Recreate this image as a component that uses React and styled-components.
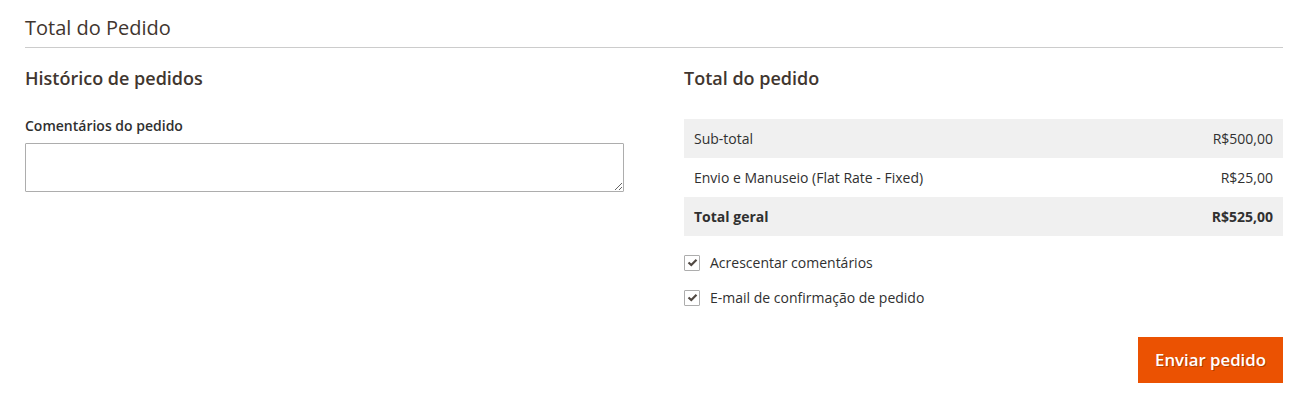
import React from "react";
import styled, { createGlobalStyle } from "styled-components";

const Global = createGlobalStyle`
  html, body { margin: 0; padding: 0; background: #fff; }
  body { font-family: "Open Sans", "Noto Sans", sans-serif; color: #303030; }
  * { box-sizing: border-box; }
`;

const Page = styled.div`
  padding: 16px 24px 0 25px;
`;

const SectionTitle = styled.h2`
  margin: 0;
  font-size: 20px;
  font-weight: 400;
  line-height: 24px;
  color: #41362f;
  padding-bottom: 7px;
  border-bottom: 1px solid #cccccc;
`;

const Columns = styled.div`
  display: grid;
  grid-template-columns: 1fr 1fr;
  column-gap: 60px;
  padding-top: 20px;
`;

const Column = styled.div`
  display: flex;
  flex-direction: column;
`;

const ItemTitle = styled.h3`
  margin: 0;
  font-size: 18px;
  font-weight: 600;
  line-height: 20px;
  color: #41362f;
`;

const FieldLabel = styled.label`
  margin-top: 28px;
  font-size: 14px;
  font-weight: 600;
  line-height: 19px;
  color: #303030;
`;

const TextArea = styled.textarea`
  margin-top: 8px;
  width: 100%;
  height: 49px;
  border: 1px solid #adadad;
  border-radius: 1px;
  font-family: inherit;
  font-size: 14px;
  padding: 6px 10px;
  outline: none;
`;

const Totals = styled.div`
  margin-top: 31px;
  display: flex;
  flex-direction: column;
`;

const Row = styled.div`
  display: flex;
  justify-content: space-between;
  padding: 10px 10px;
  font-size: 14px;
  line-height: 19px;
  background: ${(p) => (p.$shaded ? "#f0f0f0" : "transparent")};
  font-weight: ${(p) => (p.$strong ? 700 : 400)};
  color: #303030;
`;

const Checks = styled.div`
  margin-top: 17px;
  display: flex;
  flex-direction: column;
  gap: 16px;
`;

const CheckRow = styled.label`
  display: flex;
  align-items: center;
  gap: 10px;
  font-size: 14px;
  line-height: 19px;
  color: #303030;
`;

const Box = styled.span`
  width: 16px;
  height: 16px;
  border: 1px solid #adadad;
  border-radius: 1px;
  background: #fff;
  display: flex;
  align-items: center;
  justify-content: center;
  flex: none;
`;

const Actions = styled.div`
  margin-top: 30px;
  display: flex;
  justify-content: flex-end;
`;

const PrimaryButton = styled.button`
  background: #eb5202;
  border: 1px solid #eb5202;
  color: #fff;
  font-family: inherit;
  font-size: 16.8px;
  font-weight: 600;
  line-height: 22px;
  padding: 11px 16px;
  text-shadow: 1px 1px 0 rgba(0, 0, 0, 0.25);
  border-radius: 0;
  cursor: pointer;
`;

const Check = ({ label }) => (
  <CheckRow>
    <Box>
      <svg width="11" height="9" viewBox="0 0 11 9">
        <path d="M1.5 4.5 L4.3 7 L9.5 1.8" fill="none" stroke="#514943" strokeWidth="2.2" />
      </svg>
    </Box>
    {label}
  </CheckRow>
);

export default function App() {
  return (
    <>
      <Global />
      <Page>
        <SectionTitle>Total do Pedido</SectionTitle>
        <Columns>
          <Column>
            <ItemTitle>Histórico de pedidos</ItemTitle>
            <FieldLabel>Comentários do pedido</FieldLabel>
            <TextArea />
          </Column>
          <Column>
            <ItemTitle>Total do pedido</ItemTitle>
            <Totals>
              <Row $shaded>
                <span>Sub-total</span>
                <span>R$500,00</span>
              </Row>
              <Row>
                <span>Envio e Manuseio (Flat Rate - Fixed)</span>
                <span>R$25,00</span>
              </Row>
              <Row $shaded $strong>
                <span>Total geral</span>
                <span>R$525,00</span>
              </Row>
            </Totals>
            <Checks>
              <Check label="Acrescentar comentários" />
              <Check label="E-mail de confirmação de pedido" />
            </Checks>
            <Actions>
              <PrimaryButton>Enviar pedido</PrimaryButton>
            </Actions>
          </Column>
        </Columns>
      </Page>
    </>
  );
}
